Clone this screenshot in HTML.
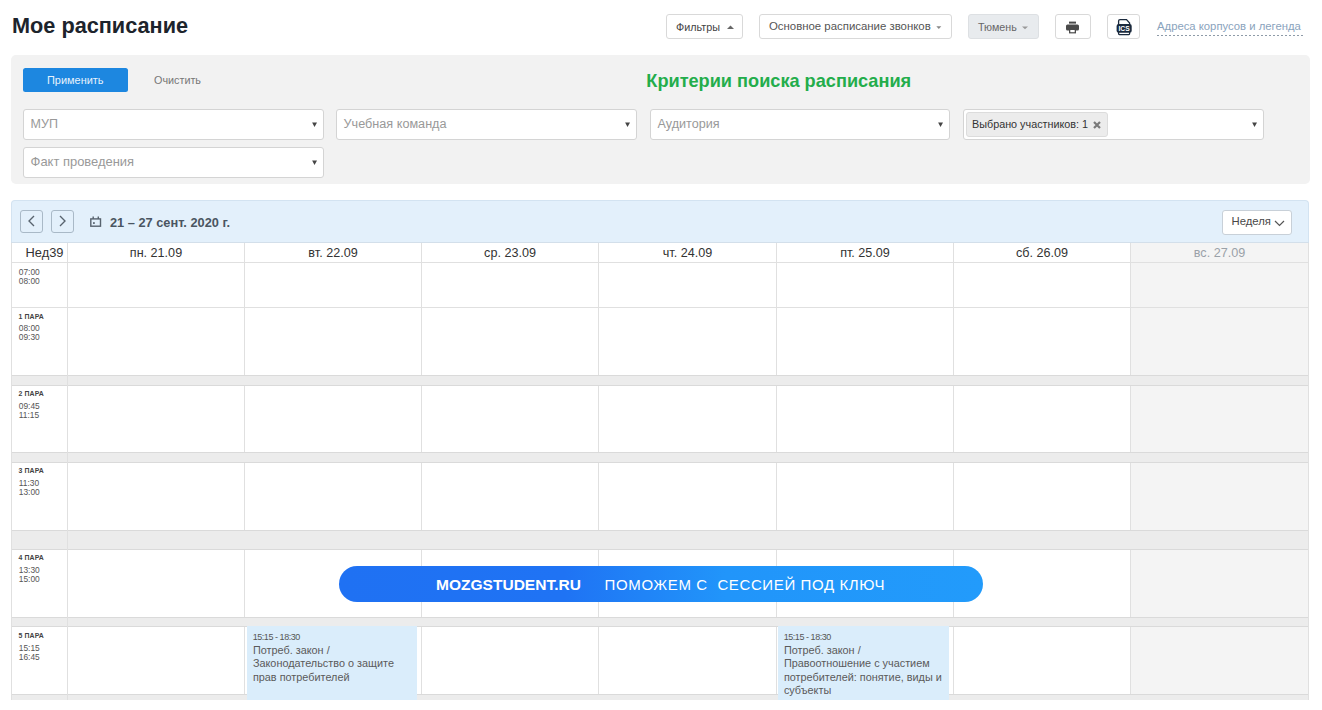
<!DOCTYPE html>
<html><head><meta charset="utf-8"><style>
html,body{margin:0;padding:0;background:#fff;width:1322px;height:710px;overflow:hidden;position:relative}
.t{position:absolute;white-space:nowrap;font-family:"Liberation Sans", sans-serif}
.b{position:absolute}
</style></head><body>
<div class="t" style="left:12px;top:14.73px;font-size:21.7px;line-height:21.7px;color:#1d242c;font-weight:bold;">Мое расписание</div>
<div class="b" style="left:666px;top:14px;width:77px;height:25px;background:#fff;border:1px solid #d9d9d9;border-radius:3px;box-sizing:border-box;"></div>
<div class="t" style="left:676px;top:21.56px;font-size:10.8px;line-height:10.8px;color:#444;font-weight:normal;">Фильтры</div>
<svg class="b" style="left:727px;top:25.3px" width="7" height="5"><path d="M0 4 L3.5 0.5 L7 4Z" fill="#666"/></svg>
<div class="b" style="left:759px;top:14px;width:193px;height:25px;background:#fff;border:1px solid #d9d9d9;border-radius:3px;box-sizing:border-box;"></div>
<div class="t" style="left:769px;top:21.05px;font-size:11.4px;line-height:11.4px;color:#555;font-weight:normal;">Основное расписание звонков</div>
<svg class="b" style="left:936px;top:25.6px" width="6" height="4"><path d="M0.3 0.3 L5.3 0.3 L2.8 2.9Z" fill="#888"/></svg>
<div class="b" style="left:968px;top:14px;width:71px;height:25px;background:#e8ebee;border:1px solid #dde0e3;border-radius:3px;box-sizing:border-box;"></div>
<div class="t" style="left:978px;top:21.54px;font-size:10.7px;line-height:10.7px;color:#666;font-weight:normal;">Тюмень</div>
<svg class="b" style="left:1022px;top:25.5px" width="6" height="4"><path d="M0 0.5 L6 0.5 L3 3.2Z" fill="#999"/></svg>
<div class="b" style="left:1055px;top:14px;width:36px;height:25px;background:#fff;border:1px solid #d9d9d9;border-radius:3px;box-sizing:border-box;"></div>
<svg class="b" style="left:1064px;top:20px" width="17" height="15" viewBox="0 0 17 15">
<rect x="5" y="1.6" width="7" height="2" fill="#4a4a4a"/>
<rect x="2" y="4.6" width="13" height="6" rx="1.5" fill="#4a4a4a"/>
<rect x="5" y="9" width="7" height="4.4" fill="#4a4a4a"/>
<rect x="6.3" y="10" width="4.4" height="2.2" fill="#fff"/>
</svg>
<div class="b" style="left:1107px;top:14px;width:33px;height:25px;background:#fff;border:1px solid #d9d9d9;border-radius:3px;box-sizing:border-box;"></div>
<svg class="b" style="left:1115px;top:18px" width="18" height="18" viewBox="0 0 18 18">
<path d="M3.6 15.8 V3 Q3.6 1.6 5 1.6 H11.5 L14.6 5 V15.8 Q14.6 16.6 13.8 16.6 H4.4 Q3.6 16.6 3.6 15.8Z" fill="#fff" stroke="#1b2a3d" stroke-width="1.3"/>
<rect x="1.6" y="6" width="15.1" height="8.7" rx="2" fill="#1b2a3d"/>
<text x="9.15" y="12.9" text-anchor="middle" font-family="Liberation Sans" font-weight="bold" font-size="6.8" fill="#fff">ICS</text>
</svg>
<div class="t" style="left:1157px;top:20.83px;font-size:11.3px;line-height:11.3px;color:#8aa3bd;font-weight:normal;">Адреса корпусов и легенда</div>
<div class="b" style="left:1157px;top:35px;width:146px;height:1px;background:repeating-linear-gradient(90deg,#8e9ba8 0 2px,transparent 2px 4px)"></div>
<div class="b" style="left:11px;top:55px;width:1299px;height:129px;background:#f2f2f2;border-radius:5px;"></div>
<div class="b" style="left:23px;top:68px;width:105px;height:24px;background:#1d87e0;border-radius:2.5px;"></div>
<div class="t" style="left:47px;top:74.73px;font-size:10.95px;line-height:10.95px;color:#e8f2fc;font-weight:normal;">Применить</div>
<div class="t" style="left:154px;top:74.86px;font-size:10.8px;line-height:10.8px;color:#777;font-weight:normal;">Очистить</div>
<div class="t" style="left:646.3px;top:71.83px;font-size:18.16px;line-height:18.16px;color:#23ad4b;font-weight:bold;">Критерии поиска расписания</div>
<div class="b" style="left:23px;top:109px;width:301px;height:31px;background:#fff;border:1px solid #d4d4d4;border-radius:3px;box-sizing:border-box;"></div>
<div class="t" style="left:30.6px;top:118.42px;font-size:12.5px;line-height:12.5px;color:#999;font-weight:normal;">МУП</div>
<svg class="b" style="left:312px;top:122.3px" width="6" height="6"><path d="M0.1 0.4 L5 0.4 L2.55 5Z" fill="#444"/></svg>
<div class="b" style="left:336px;top:109px;width:301px;height:31px;background:#fff;border:1px solid #d4d4d4;border-radius:3px;box-sizing:border-box;"></div>
<div class="t" style="left:343.6px;top:118.19px;font-size:12.65px;line-height:12.65px;color:#999;font-weight:normal;">Учебная команда</div>
<svg class="b" style="left:625px;top:122.3px" width="6" height="6"><path d="M0.1 0.4 L5 0.4 L2.55 5Z" fill="#444"/></svg>
<div class="b" style="left:650px;top:109px;width:300px;height:31px;background:#fff;border:1px solid #d4d4d4;border-radius:3px;box-sizing:border-box;"></div>
<div class="t" style="left:657.6px;top:118.23px;font-size:12.6px;line-height:12.6px;color:#999;font-weight:normal;">Аудитория</div>
<svg class="b" style="left:938px;top:122.3px" width="6" height="6"><path d="M0.1 0.4 L5 0.4 L2.55 5Z" fill="#444"/></svg>
<div class="b" style="left:963px;top:109px;width:301px;height:31px;background:#fff;border:1px solid #d4d4d4;border-radius:3px;box-sizing:border-box;"></div>
<svg class="b" style="left:1252px;top:122.3px" width="6" height="6"><path d="M0.1 0.4 L5 0.4 L2.55 5Z" fill="#444"/></svg>
<div class="b" style="left:966px;top:112px;width:142px;height:25px;background:#ececec;border:1px solid #dcdcdc;border-radius:3px;box-sizing:border-box;"></div>
<div class="t" style="left:972px;top:119.06px;font-size:10.8px;line-height:10.8px;color:#333;font-weight:normal;">Выбрано участников: 1</div>
<svg class="b" style="left:1093px;top:120.8px" width="8" height="8"><path d="M1 1 L7 7 M7 1 L1 7" stroke="#7a7a7a" stroke-width="2.2"/></svg>
<div class="b" style="left:23px;top:147px;width:301px;height:31px;background:#fff;border:1px solid #d4d4d4;border-radius:3px;box-sizing:border-box;"></div>
<div class="t" style="left:30.6px;top:156.35px;font-size:12.94px;line-height:12.94px;color:#999;font-weight:normal;">Факт проведения</div>
<svg class="b" style="left:312px;top:160.3px" width="6" height="6"><path d="M0.1 0.4 L5 0.4 L2.55 5Z" fill="#444"/></svg>
<div class="b" style="left:11px;top:200px;width:1298px;height:43px;background:#e3f0fb;border:1px solid #d3e3f1;border-bottom:none;border-radius:4px 4px 0 0;box-sizing:border-box;"></div>
<div class="b" style="left:20px;top:210px;width:23px;height:23px;border:1px solid #a9b9c7;border-radius:3px;box-sizing:border-box;"></div>
<div class="b" style="left:51px;top:210px;width:23px;height:23px;border:1px solid #a9b9c7;border-radius:3px;box-sizing:border-box;"></div>
<svg class="b" style="left:27px;top:215px" width="9" height="12"><path d="M7 1 L2 6 L7 11" fill="none" stroke="#58636e" stroke-width="1.35"/></svg>
<svg class="b" style="left:58px;top:215px" width="9" height="12"><path d="M2 1 L7 6 L2 11" fill="none" stroke="#58636e" stroke-width="1.35"/></svg>
<svg class="b" style="left:89px;top:215px" width="13" height="13" viewBox="0 0 13 13">
<rect x="1.8" y="3.9" width="9.7" height="7.3" fill="none" stroke="#58636e" stroke-width="1.4"/>
<path d="M4.2 1.4 V3.9 M9.3 1.4 V3.9" stroke="#58636e" stroke-width="1.4"/>
<rect x="4" y="7.2" width="1.8" height="1.7" fill="#58636e"/>
</svg>
<div class="t" style="left:110px;top:216.56px;font-size:12.8px;line-height:12.8px;color:#4a5561;font-weight:bold;">21 – 27 сент. 2020 г.</div>
<div class="b" style="left:1222px;top:210px;width:70px;height:25px;background:#fff;border:1px solid #c8d0d8;border-radius:3px;box-sizing:border-box;"></div>
<div class="t" style="left:1231.5px;top:216.43px;font-size:11.3px;line-height:11.3px;color:#484848;font-weight:normal;">Неделя</div>
<svg class="b" style="left:1274px;top:219.6px" width="11" height="7"><path d="M1 1 L5.5 5.5 L10 1" fill="none" stroke="#555" stroke-width="1.2"/></svg>
<div class="b" style="left:11px;top:242px;width:1298px;height:1px;background:#d3dfea;"></div>
<div class="b" style="left:1131px;top:243px;width:177px;height:457px;background:#f4f4f4;"></div>
<div class="b" style="left:244px;top:243px;width:1px;height:457px;background:#e0e0e0;"></div>
<div class="b" style="left:421px;top:243px;width:1px;height:457px;background:#e0e0e0;"></div>
<div class="b" style="left:598px;top:243px;width:1px;height:457px;background:#e0e0e0;"></div>
<div class="b" style="left:776px;top:243px;width:1px;height:457px;background:#e0e0e0;"></div>
<div class="b" style="left:953px;top:243px;width:1px;height:457px;background:#e0e0e0;"></div>
<div class="b" style="left:1130px;top:243px;width:1px;height:457px;background:#e0e0e0;"></div>
<div class="b" style="left:12px;top:375px;width:1296px;height:10px;background:#ececec;"></div>
<div class="b" style="left:12px;top:452px;width:1296px;height:10px;background:#ececec;"></div>
<div class="b" style="left:12px;top:530px;width:1296px;height:19px;background:#ececec;"></div>
<div class="b" style="left:12px;top:617px;width:1296px;height:9px;background:#ececec;"></div>
<div class="b" style="left:12px;top:694px;width:1296px;height:6px;background:#ececec;"></div>
<div class="b" style="left:11px;top:262px;width:1298px;height:1px;background:#e0e0e0;"></div>
<div class="b" style="left:11px;top:307px;width:1298px;height:1px;background:#e0e0e0;"></div>
<div class="b" style="left:11px;top:375px;width:1298px;height:1px;background:#dadada;"></div>
<div class="b" style="left:11px;top:385px;width:1298px;height:1px;background:#dadada;"></div>
<div class="b" style="left:11px;top:452px;width:1298px;height:1px;background:#dadada;"></div>
<div class="b" style="left:11px;top:462px;width:1298px;height:1px;background:#dadada;"></div>
<div class="b" style="left:11px;top:530px;width:1298px;height:1px;background:#dadada;"></div>
<div class="b" style="left:11px;top:549px;width:1298px;height:1px;background:#dadada;"></div>
<div class="b" style="left:11px;top:617px;width:1298px;height:1px;background:#dadada;"></div>
<div class="b" style="left:11px;top:626px;width:1298px;height:1px;background:#dadada;"></div>
<div class="b" style="left:11px;top:694px;width:1298px;height:1px;background:#dadada;"></div>
<div class="b" style="left:11px;top:243px;width:1px;height:457px;background:#e0e0e0;"></div>
<div class="b" style="left:67px;top:243px;width:1px;height:457px;background:#e0e0e0;"></div>
<div class="b" style="left:1308px;top:243px;width:1px;height:457px;background:#e0e0e0;"></div>
<div class="t" style="left:25.5px;top:247.11px;font-size:12.87px;line-height:12.87px;color:#333;font-weight:normal;">Нед39</div>
<div class="t" style="left:96.0px;width:120px;text-align:center;top:247.33px;font-size:12.6px;line-height:12.6px;color:#333">пн. 21.09</div>
<div class="t" style="left:273.0px;width:120px;text-align:center;top:247.33px;font-size:12.6px;line-height:12.6px;color:#333">вт. 22.09</div>
<div class="t" style="left:450.0px;width:120px;text-align:center;top:247.33px;font-size:12.6px;line-height:12.6px;color:#333">ср. 23.09</div>
<div class="t" style="left:627.5px;width:120px;text-align:center;top:247.33px;font-size:12.6px;line-height:12.6px;color:#333">чт. 24.09</div>
<div class="t" style="left:805.0px;width:120px;text-align:center;top:247.33px;font-size:12.6px;line-height:12.6px;color:#333">пт. 25.09</div>
<div class="t" style="left:982.0px;width:120px;text-align:center;top:247.33px;font-size:12.6px;line-height:12.6px;color:#333">сб. 26.09</div>
<div class="t" style="left:1159.5px;width:120px;text-align:center;top:247.33px;font-size:12.6px;line-height:12.6px;color:#9aa1a8">вс. 27.09</div>
<div class="t" style="left:18.8px;top:267.89px;font-size:8.4px;line-height:8.4px;color:#555;font-weight:normal;">07:00</div>
<div class="t" style="left:18.8px;top:276.89px;font-size:8.4px;line-height:8.4px;color:#555;font-weight:normal;">08:00</div>
<div class="t" style="left:18.6px;top:313.86px;font-size:6.9px;line-height:6.9px;color:#444;font-weight:bold;letter-spacing:0.1px">1 ПАРА</div>
<div class="t" style="left:18.8px;top:324.39px;font-size:8.4px;line-height:8.4px;color:#555;font-weight:normal;">08:00</div>
<div class="t" style="left:18.8px;top:333.49px;font-size:8.4px;line-height:8.4px;color:#555;font-weight:normal;">09:30</div>
<div class="t" style="left:18.6px;top:391.06px;font-size:6.9px;line-height:6.9px;color:#444;font-weight:bold;letter-spacing:0.1px">2 ПАРА</div>
<div class="t" style="left:18.8px;top:401.59px;font-size:8.4px;line-height:8.4px;color:#555;font-weight:normal;">09:45</div>
<div class="t" style="left:18.8px;top:410.69px;font-size:8.4px;line-height:8.4px;color:#555;font-weight:normal;">11:15</div>
<div class="t" style="left:18.6px;top:468.36px;font-size:6.9px;line-height:6.9px;color:#444;font-weight:bold;letter-spacing:0.1px">3 ПАРА</div>
<div class="t" style="left:18.8px;top:478.89px;font-size:8.4px;line-height:8.4px;color:#555;font-weight:normal;">11:30</div>
<div class="t" style="left:18.8px;top:487.99px;font-size:8.4px;line-height:8.4px;color:#555;font-weight:normal;">13:00</div>
<div class="t" style="left:18.6px;top:555.06px;font-size:6.9px;line-height:6.9px;color:#444;font-weight:bold;letter-spacing:0.1px">4 ПАРА</div>
<div class="t" style="left:18.8px;top:565.59px;font-size:8.4px;line-height:8.4px;color:#555;font-weight:normal;">13:30</div>
<div class="t" style="left:18.8px;top:574.69px;font-size:8.4px;line-height:8.4px;color:#555;font-weight:normal;">15:00</div>
<div class="t" style="left:18.6px;top:633.46px;font-size:6.9px;line-height:6.9px;color:#444;font-weight:bold;letter-spacing:0.1px">5 ПАРА</div>
<div class="t" style="left:18.8px;top:643.99px;font-size:8.4px;line-height:8.4px;color:#555;font-weight:normal;">15:15</div>
<div class="t" style="left:18.8px;top:653.09px;font-size:8.4px;line-height:8.4px;color:#555;font-weight:normal;">16:45</div>
<div class="b" style="left:247px;top:626px;width:170px;height:74px;background:#daedfb;"></div>
<div class="t" style="left:252.7px;top:632.58px;font-size:9px;line-height:9px;color:#555;font-weight:normal;letter-spacing:-0.45px">15:15 - 18:30</div>
<div class="t" style="left:252.9px;top:644.51px;font-size:10.86px;line-height:10.86px;color:#5a5a5a;font-weight:normal;">Потреб. закон /</div>
<div class="t" style="left:252.9px;top:658.16px;font-size:10.86px;line-height:10.86px;color:#5a5a5a;font-weight:normal;">Законодательство о защите</div>
<div class="t" style="left:252.9px;top:671.81px;font-size:10.86px;line-height:10.86px;color:#5a5a5a;font-weight:normal;">прав потребителей</div>
<div class="b" style="left:778px;top:626px;width:171px;height:74px;background:#daedfb;"></div>
<div class="t" style="left:783.7px;top:632.58px;font-size:9px;line-height:9px;color:#555;font-weight:normal;letter-spacing:-0.45px">15:15 - 18:30</div>
<div class="t" style="left:783.9px;top:644.51px;font-size:10.86px;line-height:10.86px;color:#5a5a5a;font-weight:normal;">Потреб. закон /</div>
<div class="t" style="left:783.9px;top:658.16px;font-size:10.86px;line-height:10.86px;color:#5a5a5a;font-weight:normal;">Правоотношение с участием</div>
<div class="t" style="left:783.9px;top:671.81px;font-size:10.86px;line-height:10.86px;color:#5a5a5a;font-weight:normal;">потребителей: понятие, виды и</div>
<div class="t" style="left:783.9px;top:685.46px;font-size:10.86px;line-height:10.86px;color:#5a5a5a;font-weight:normal;">субъекты</div>
<div class="b" style="left:339px;top:566px;width:644px;height:36px;background:linear-gradient(90deg,#1f71f3 0%,#1f73f4 35%,#2195fa 60%,#229bfb 100%);border-radius:18px;"></div>
<div class="t" style="left:436px;top:576.85px;font-size:15.54px;line-height:15.54px;color:#fff;font-weight:bold;">MOZGSTUDENT.RU</div>
<div class="t" style="left:604.6px;top:577.30px;font-size:15px;line-height:15px;color:#fff;font-weight:normal;letter-spacing:0.62px">ПОМОЖЕМ С&nbsp; СЕССИЕЙ ПОД КЛЮЧ</div>
</body></html>
